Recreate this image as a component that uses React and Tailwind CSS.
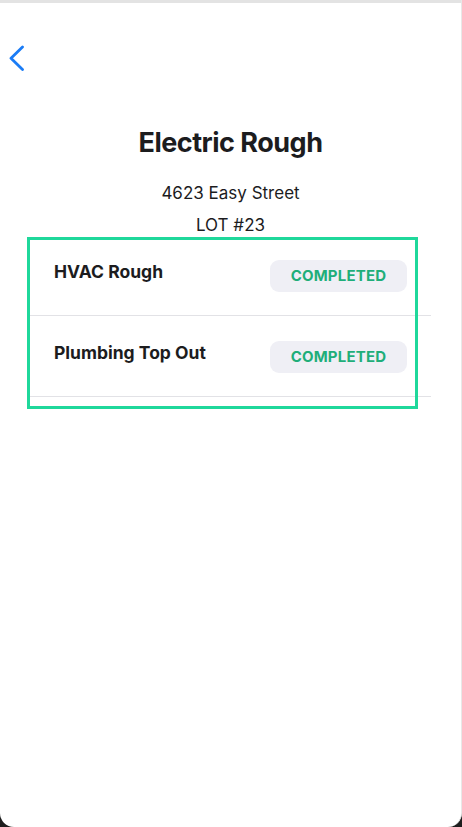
import React from 'react';

const items = [
  { name: 'HVAC Rough', status: 'COMPLETED' },
  { name: 'Plumbing Top Out', status: 'COMPLETED' },
];

function BackChevron() {
  return (
    <svg width="16" height="26" viewBox="0 0 16 26" fill="none">
      <polyline
        points="13.5,2 2,13.3 13.5,24.5"
        stroke="#1a7cf6"
        strokeWidth="2.8"
        strokeLinecap="round"
        strokeLinejoin="round"
      />
    </svg>
  );
}

export default function App() {
  return (
    <div className="h-[827px] w-[462px] bg-[#1e1e1e]" style={{ fontFamily: 'Inter, "Noto Sans", sans-serif' }}>
      <div className="flex h-full flex-col rounded-b-[14px] border-r border-[#e8e8e8] bg-white">
        {/* top edge */}
        <div className="h-[3px] bg-[#e3e3e3]" />

        {/* nav */}
        <div className="pl-[9px] pt-[42px]">
          <button aria-label="Back" className="block">
            <BackChevron />
          </button>
        </div>

        {/* header */}
        <h1 className="mt-[56px] text-center text-[27px] font-bold leading-[32px] tracking-[-0.5px] text-[#1c1c1e]">
          Electric Rough
        </h1>
        <p className="mt-[22px] text-center text-[17px] leading-[24px] text-[#1c1c1e]">4623 Easy Street</p>
        <p className="mt-[10px] text-center text-[17px] leading-[20px] text-[#1c1c1e]">LOT #23</p>

        {/* inspections */}
        <div className="relative mx-[30px]">
          {items.map((item) => (
            <div
              key={item.name}
              className="flex h-[81px] items-start justify-between border-b border-[#e2e2e6] pl-[24px] pr-[24px] pt-[25px]"
            >
              <span className="pt-[1px] text-[17.5px] font-bold leading-[22px] text-[#1c1c1e]">{item.name}</span>
              <span className="flex h-[32px] w-[137px] items-center justify-center rounded-[9px] bg-[#efeff5] text-[15px] font-bold tracking-[0.2px] text-[#1fae7a]">
                {item.status}
              </span>
            </div>
          ))}
          {/* highlight */}
          <div className="pointer-events-none absolute left-[-3px] top-[2px] h-[172px] w-[391px] border-[3px] border-[#1fd89b]" />
        </div>
      </div>
    </div>
  );
}
